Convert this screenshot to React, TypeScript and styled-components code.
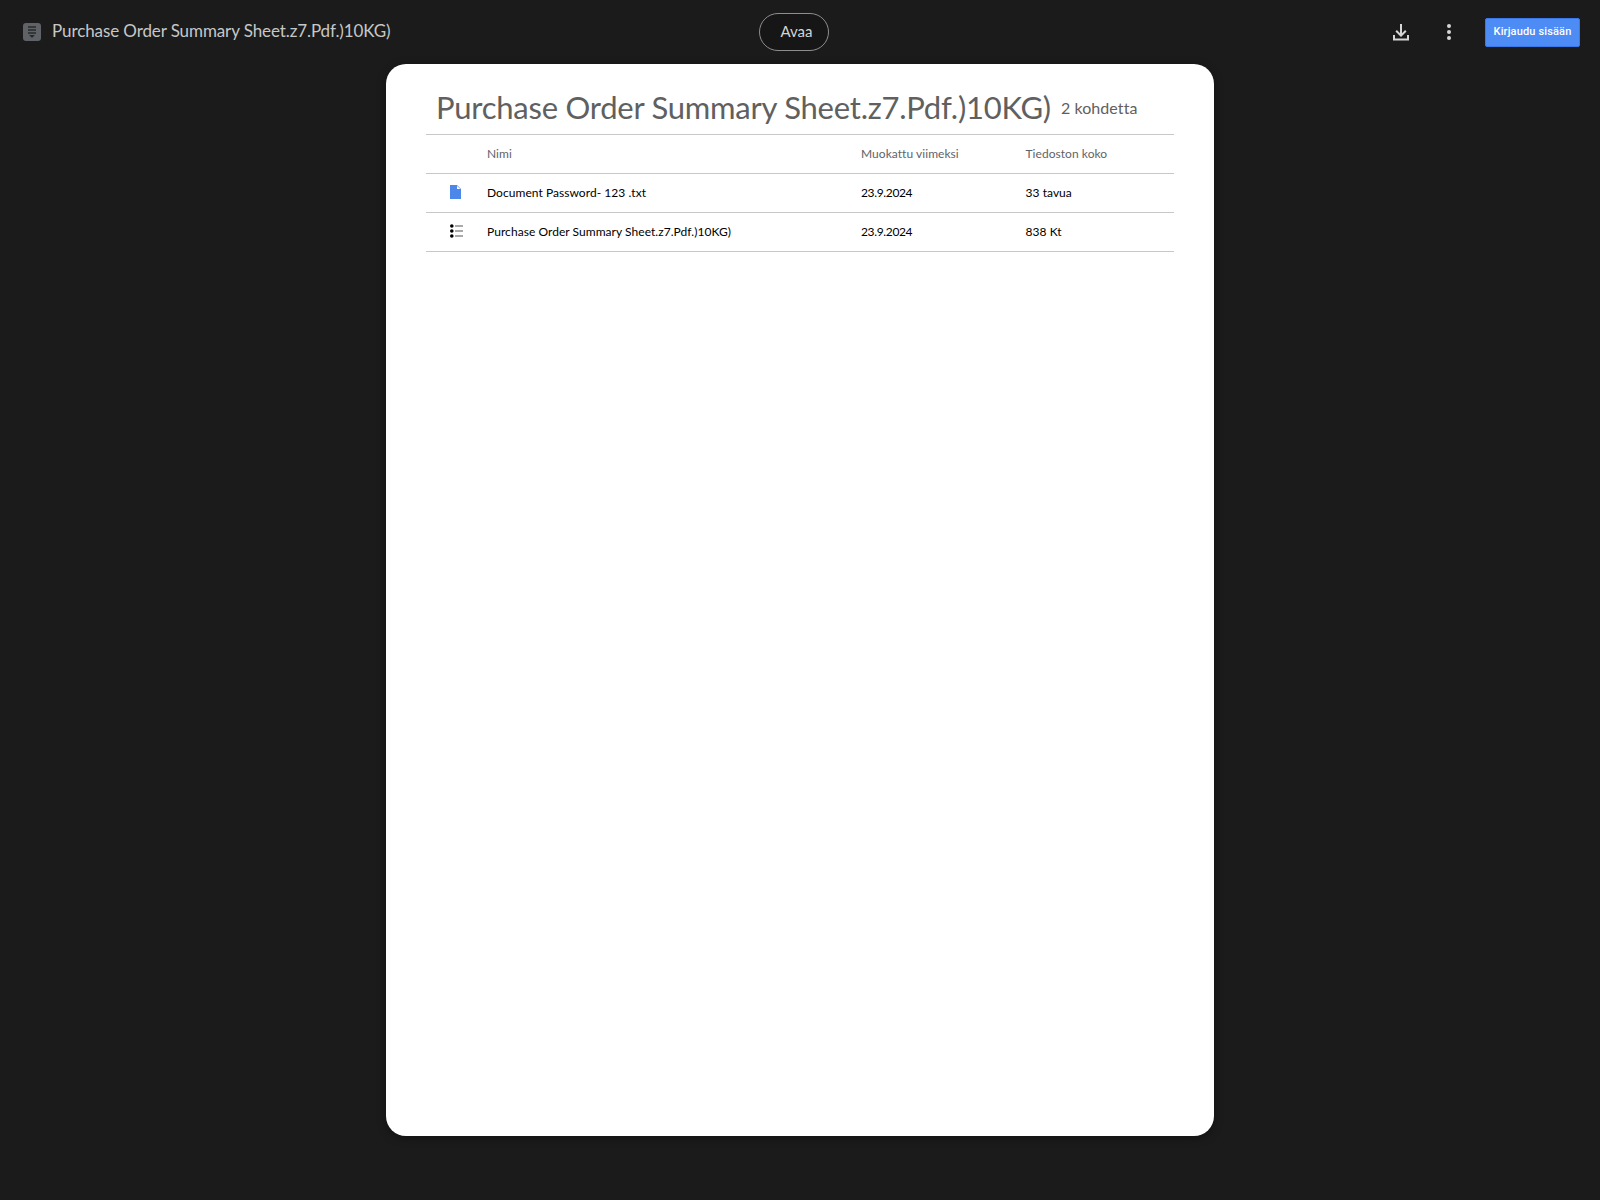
import React from "react";
import styled, { createGlobalStyle } from "styled-components";

const Global = createGlobalStyle`
  html, body { margin: 0; padding: 0; background: #1b1b1b; }
  body { font-family: "Lato", "Liberation Sans", sans-serif; }
`;

const Page = styled.div`
  width: 1600px;
  height: 1200px;
  background: #1b1b1b;
  display: flex;
  flex-direction: column;
  overflow: hidden;
`;

const TopBar = styled.header`
  height: 64px;
  display: grid;
  grid-template-columns: 759px 70px 1fr;
  align-items: center;
`;

const FileTitleGroup = styled.div`
  display: flex;
  align-items: center;
  padding-left: 23px;
  gap: 11px;
`;

const FileTitle = styled.span`
  font-size: 17px;
  line-height: 20px;
  padding-bottom: 2px;
  letter-spacing: -0.1px;
  color: #c7c7c7;
`;

const OpenButton = styled.button`
  width: 70px;
  height: 38px;
  box-sizing: border-box;
  border: 1px solid #8e8e8e;
  border-radius: 19px;
  background: #161616;
  color: #d4d4d4;
  font-family: inherit;
  font-size: 15px;
  padding: 0 0 2px 5px;
`;

const Actions = styled.div`
  display: flex;
  align-items: center;
  justify-content: flex-end;
  padding-right: 20px;
`;

const IconSlot = styled.span<{ $mr: number }>`
  display: flex;
  margin-right: ${(p) => p.$mr}px;
`;

const SignIn = styled.button`
  width: 95px;
  height: 29px;
  box-sizing: border-box;
  border: 1px solid #3b78e7;
  border-radius: 2px;
  background: #4d8bf5;
  color: #fff;
  font-family: "Roboto", sans-serif;
  font-size: 11px;
  font-weight: 500;
  letter-spacing: 0.15px;
  padding: 0 0 1px;
`;

const Main = styled.main`
  display: flex;
  justify-content: center;
`;

const Card = styled.section`
  width: 828px;
  height: 1072px;
  box-sizing: border-box;
  background: #fff;
  border-radius: 20px;
  box-shadow: 0 2px 10px rgba(0, 0, 0, 0.35);
  padding: 16px 40px 0;
`;

const Heading = styled.div`
  height: 54px;
  display: flex;
  align-items: center;
  padding-left: 10px;
  gap: 10px;
  color: #606060;
`;

const HeadingTitle = styled.h1`
  margin: 0;
  font-size: 31px;
  line-height: 54px;
  font-weight: 400;
  letter-spacing: -0.24px;
`;

const Count = styled.span`
  font-size: 16px;
  letter-spacing: 0.08px;
`;

const Row = styled.div<{ $head?: boolean }>`
  height: 39px;
  box-sizing: border-box;
  padding-bottom: 2px;
  display: grid;
  grid-template-columns: 61px 374px 164.5px 1fr;
  align-items: center;
  border-top: 1px solid #c8c8c8;
  font-size: 12px;
  letter-spacing: 0.05px;
  color: ${(p) => (p.$head ? "#5f6368" : "#000")};
`;

const Rows = styled.div`
  border-bottom: 1px solid #c8c8c8;
`;

const IconCell = styled.div`
  display: flex;
  padding-left: 24px;
`;

const DateCell = styled.div`
  letter-spacing: -0.35px;
`;

const DocIcon = () => (
  <svg width="11" height="14" viewBox="0 0 11 14">
    <path d="M0 0H7L11 4V14H0Z" fill="#4d87ea" />
    <path d="M7 0.8V4H10.3Z" fill="#fff" />
  </svg>
);

const ListIcon = () => (
  <svg width="13" height="14" viewBox="0 0 13 14">
    <circle cx="1.8" cy="2" r="1.8" fill="#000" />
    <circle cx="1.8" cy="7" r="1.8" fill="#000" />
    <circle cx="1.8" cy="12" r="1.8" fill="#000" />
    <path d="M5 2H13M5 7H13M5 12H13" stroke="#555" strokeWidth="1" />
  </svg>
);

const ArchiveIcon = () => (
  <svg width="18" height="18" viewBox="0 0 18 18">
    <rect width="18" height="18" rx="3" fill="#5f6368" />
    <path d="M5 4H13M5 7H13M5 10H13" stroke="#2a2a2a" strokeWidth="1.5" />
    <path d="M6 12H12L9 15Z" fill="#2a2a2a" />
  </svg>
);

const DownloadIcon = () => (
  <svg width="24" height="24" viewBox="0 0 24 24" fill="#d6d6d6">
    <path d="M11 4h2v9.2l3.1-3.1 1.4 1.4L12 17l-5.5-5.5 1.4-1.4L11 13.2z" />
    <path d="M4 15h2v3.5h12V15h2v5.5H4z" />
  </svg>
);

const DotsIcon = () => (
  <svg width="24" height="24" viewBox="0 0 24 24" fill="#d6d6d6">
    <circle cx="12" cy="6" r="2" />
    <circle cx="12" cy="12" r="2" />
    <circle cx="12" cy="18" r="2" />
  </svg>
);

const files = [
  { icon: <DocIcon />, name: "Document Password- 123 .txt", date: "23.9.2024", size: "33 tavua" },
  { icon: <ListIcon />, name: "Purchase Order Summary Sheet.z7.Pdf.)10KG)", date: "23.9.2024", size: "838 Kt" },
];

const TITLE = "Purchase Order Summary Sheet.z7.Pdf.)10KG)";

export default function App() {
  return (
    <Page>
      <Global />
      <TopBar>
        <FileTitleGroup>
          <ArchiveIcon />
          <FileTitle>{TITLE}</FileTitle>
        </FileTitleGroup>
        <OpenButton>Avaa</OpenButton>
        <Actions>
          <IconSlot $mr={24}><DownloadIcon /></IconSlot>
          <IconSlot $mr={24}><DotsIcon /></IconSlot>
          <SignIn>Kirjaudu sisään</SignIn>
        </Actions>
      </TopBar>
      <Main>
        <Card>
          <Heading>
            <HeadingTitle>{TITLE}</HeadingTitle>
            <Count>2 kohdetta</Count>
          </Heading>
          <Rows>
            <Row $head>
              <div />
              <div>Nimi</div>
              <div>Muokattu viimeksi</div>
              <div>Tiedoston koko</div>
            </Row>
            {files.map((f) => (
              <Row key={f.name}>
                <IconCell>{f.icon}</IconCell>
                <div>{f.name}</div>
                <DateCell>{f.date}</DateCell>
                <div>{f.size}</div>
              </Row>
            ))}
          </Rows>
        </Card>
      </Main>
    </Page>
  );
}
